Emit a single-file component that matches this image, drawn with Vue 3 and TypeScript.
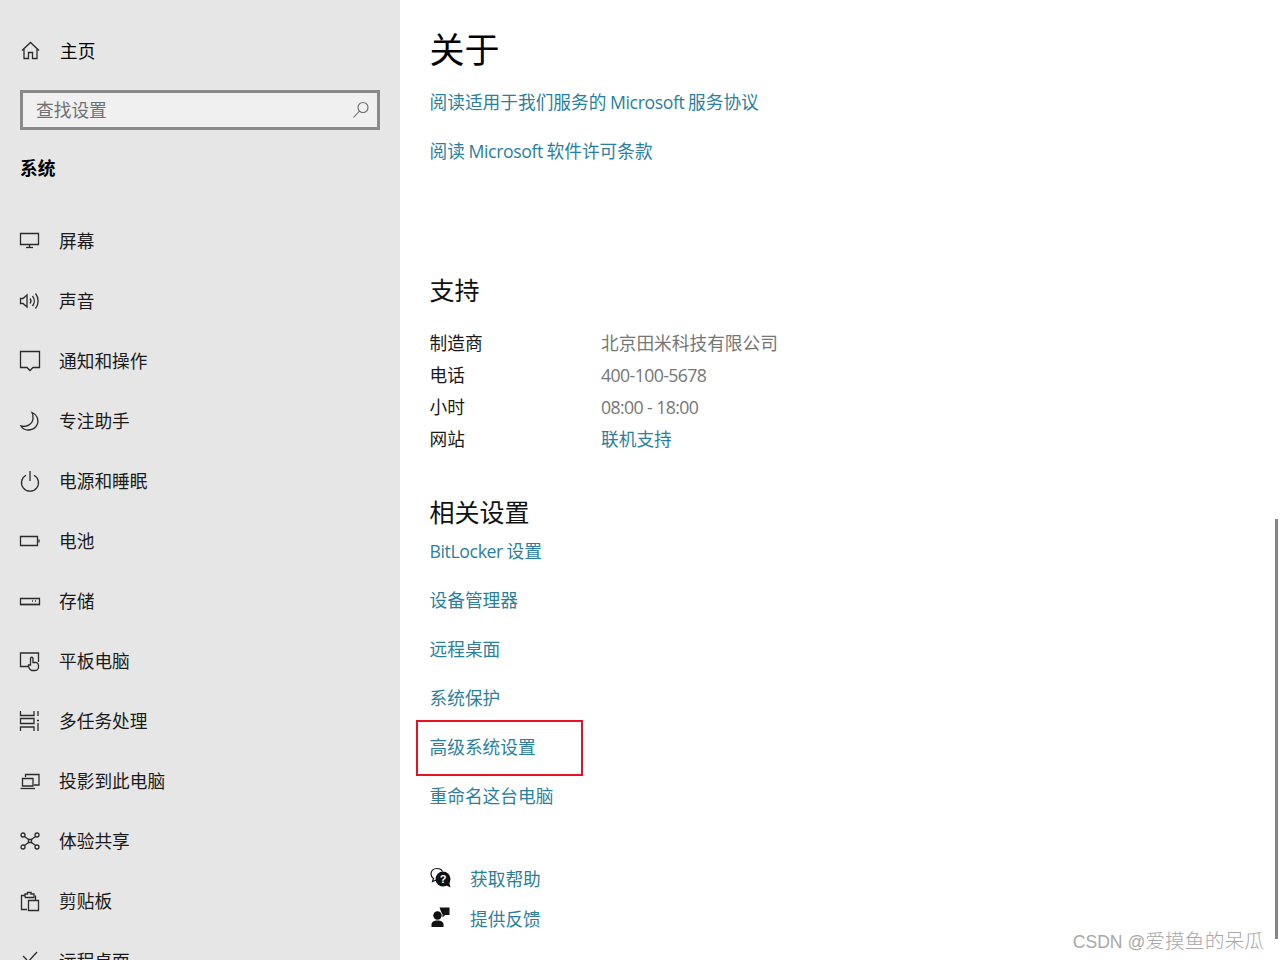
<script setup lang="ts">
interface NavItem { label: string; paths: string[] }
const navItems: NavItem[] = [
  { label: '屏幕', paths: ['M1.5 3.5H19.5V14.5H1.5Z', 'M10.5 14.5V17.5', 'M7 17.5H14'] },
  { label: '声音', paths: ['M1.5 8.5H4L8 5V17L4 13.5H1.5Z', 'M11 8.5A4 4 0 0 1 11 13.5', 'M13.5 6A8 8 0 0 1 13.5 16', 'M16.5 3.5A12 12 0 0 1 16.5 18.5'] },
  { label: '通知和操作', paths: ['M1.5 1.5H20.5V17.5H14L11 20.5L8 17.5H1.5Z'] },
  { label: '专注助手', paths: ['M13 2.5C19 5 20.5 12 17 16.5C13 21 5 21.5 2 16C8 17.5 13.5 14 14 8.5C14.2 6 13.8 4 13 2.5Z'] },
  { label: '电源和睡眠', paths: ['M7 5.2A8.5 8.5 0 1 0 15 5.2', 'M11 1V11'] },
  { label: '电池', paths: ['M1.5 6.5H18.5V15.5H1.5Z', 'M20 9.5V12.5'] },
  { label: '存储', paths: ['M1.5 8.5H20.5V14.5H1.5Z', 'M13 11H14', 'M16 11H17', 'M1.5 14.5H20.5'] },
  { label: '平板电脑', paths: ['M9 16.5H1.5V3H19.5V12', 'M12.5 20.5C10.5 19.5 9.5 17 9.5 15L11.5 15V8.5A1.2 1.2 0 0 1 14 8.5V12.5H16A3 3 0 0 1 19.5 15.5V17A3.5 3.5 0 0 1 16 20.5Z'] },
  { label: '多任务处理', paths: ['M1.5 1V5.5H15V1', 'M1.5 8.5H15V13.5H1.5Z', 'M1.5 21V17H15V21', 'M19 1V6', 'M18 10.5H20', 'M19 13V21'] },
  { label: '投影到此电脑', paths: ['M6.5 7V4.5H20V15H15', 'M3.5 8.5H14V16H3.5Z', 'M1.5 18.5H16'] },
  { label: '体验共享', paths: ['M9.5 9.5H12.5V12.5H9.5Z', 'M5.5 6.5L9.5 9.5', 'M16.5 6.5L12.5 9.5', 'M5.5 15.5L9.5 12.5', 'M16.5 15.5L12.5 12.5', 'M2 5a2 2 0 1 0 4 0a2 2 0 1 0 -4 0', 'M16 5a2 2 0 1 0 4 0a2 2 0 1 0 -4 0', 'M2 17a2 2 0 1 0 4 0a2 2 0 1 0 -4 0', 'M16 17a2 2 0 1 0 4 0a2 2 0 1 0 -4 0'] },
  { label: '剪贴板', paths: ['M8 19.5H2.5V5.5H6', 'M6 7.5V4H8.5V2.5H12V4H15V7.5H6', 'M16.5 5.5V10', 'M9.5 10.5H19.5V20.5H9.5Z'] },
  { label: '远程桌面', paths: ['M4 6L8 10', 'M18 2L8 13'] },
]
const split = (s: string): string[] => s.split(/([A-Za-z]+)/)
const topLinks = ['阅读适用于我们服务的 Microsoft 服务协议', '阅读 Microsoft 软件许可条款']
const relatedLinks = ['BitLocker 设置', '设备管理器', '远程桌面', '系统保护', '高级系统设置', '重命名这台电脑']
const supportRows = [
  { key: '制造商', value: '北京田米科技有限公司', cls: 'support-value' },
  { key: '电话', value: '400-100-5678', cls: 'support-value num' },
  { key: '小时', value: '08:00 - 18:00', cls: 'support-value num' },
  { key: '网站', value: '联机支持', cls: 'support-link' },
]
</script>

<template>
  <div class="page">
    <aside class="sidebar">
      <div class="row home">
        <svg class="icon" viewBox="0 0 22 22"><path d="M3 11.5L11.5 3.5L20 11.5M5 9.8V19.5H9.5V13.5H13.5V19.5H18V9.8" /></svg>
        <span>主页</span>
      </div>
      <div class="search">
        <span class="search-text">查找设置</span>
        <svg class="search-icon" viewBox="0 0 18 18"><path d="M6 6.5a5 5 0 1 0 10 0a5 5 0 1 0 -10 0M7.5 10L1.5 16.5" /></svg>
      </div>
      <div class="group">系统</div>
      <nav>
        <div v-for="item in navItems" :key="item.label" class="row nav-row">
          <svg class="icon" viewBox="0 0 22 22"><path v-for="d in item.paths" :key="d" :d="d" /></svg>
          <span class="nav-label">{{ item.label }}</span>
        </div>
      </nav>
    </aside>

    <main class="content">
      <h1>关于</h1>
      <a v-for="l in topLinks" :key="l" class="link">
        <span v-for="(part, i) in split(l)" :key="i" :class="{ latin: i % 2 === 1 }">{{ part }}</span>
      </a>

      <h2 class="support-title">支持</h2>
      <div class="support">
        <div v-for="r in supportRows" :key="r.key" class="support-row">
          <span class="support-key">{{ r.key }}</span>
          <span :class="r.cls">{{ r.value }}</span>
        </div>
      </div>

      <h2 class="related-title">相关设置</h2>
      <a v-for="l in relatedLinks" :key="l" class="link">
        <span v-if="l === '高级系统设置'" class="highlight"></span>
        <span v-for="(part, i) in split(l)" :key="i" :class="{ latin: i % 2 === 1 }">{{ part }}</span>
      </a>

      <div class="help">
        <div class="help-row">
          <svg class="help-icon" viewBox="0 0 22 22">
            <path class="outline" d="M7 1.5C3 1.5 1 4 1 7C1 9 2 10.5 3.5 11.5L2.5 14.5L6.5 13" />
            <path class="outline" d="M7 1.5C9.5 1.5 11.5 2.5 12.5 4.5" />
            <circle class="solid" cx="13" cy="12" r="7.5" />
            <path class="solid" d="M15.5 18L20.5 20.5L19 14.5Z" />
            <text class="q" x="13" y="16" text-anchor="middle">?</text>
          </svg>
          <a class="help-link">获取帮助</a>
        </div>
        <div class="help-row">
          <svg class="help-icon" viewBox="0 0 22 22">
            <circle class="solid" cx="7.5" cy="8.5" r="4.2" />
            <path class="solid" d="M1.5 20V17.5C1.5 15 4 13.5 7.5 13.5C11 13.5 13.5 15 13.5 17.5V20Z" />
            <path class="solid" d="M9.5 0.5H19.5V8H15L12.5 10.5V7.5L11 4.5Z" />
          </svg>
          <a class="help-link">提供反馈</a>
        </div>
      </div>
    </main>

    <div class="scrollbar"></div>
    <div class="watermark"><span class="wm-latin">CSDN @</span>爱摸鱼的呆瓜</div>
  </div>
</template>

<style scoped>
.page {
  position: relative;
  display: flex;
  width: 1280px;
  height: 960px;
  overflow: hidden;
  background: #fff;
  color: #1a1a1a;
  font-family: "Open Sans", "Noto Sans CJK SC", sans-serif;
  font-size: 17.7px;
  font-weight: 400;
}
.sidebar {
  flex: none;
  width: 400px;
  background: #e6e6e6;
  box-sizing: border-box;
  padding-top: 21px;
}
.row {
  display: flex;
  align-items: center;
  gap: 18px;
  padding-left: 19px;
}
.home {
  height: 58px;
  gap: 19px;
  color: #000;
}
.icon {
  flex: none;
  width: 22px;
  height: 22px;
  fill: none;
  stroke: #2b2b2b;
  stroke-width: 1.3;
}
.search {
  display: flex;
  align-items: center;
  justify-content: space-between;
  box-sizing: border-box;
  width: 360px;
  height: 40px;
  margin: 11px 0 0 20px;
  padding: 0 7px 0 13px;
  background: #f0f0f0;
  border: 3px solid #8a8a8a;
  color: #707070;
}
.search-text {
  padding-bottom: 2px;
}
.search-icon {
  width: 18px;
  height: 18px;
  fill: none;
  stroke: #666;
  stroke-width: 1.1;
}
.group {
  margin: 22px 0 0 20px;
  height: 34px;
  line-height: 32px;
  font-weight: 700;
  color: #000;
}
.nav-row {
  height: 60px;
}
.nav-label {
  padding-bottom: 2px;
}
nav {
  margin-top: 25px;
}
.content {
  flex: 1;
  padding-left: 29.5px;
}
h1 {
  margin: 21px 0 0;
  height: 57px;
  line-height: 58px;
  font-size: 35px;
  font-weight: 400;
  color: #000;
}
h2 {
  margin: 0;
  height: 28px;
  line-height: 26px;
  font-size: 25px;
  font-weight: 400;
  color: #111;
}
.link {
  position: relative;
  display: block;
  height: 49px;
  line-height: 49px;
  word-spacing: -1px;
  color: #2a7f9e;
}
.latin {
  letter-spacing: -0.4px;
}
.support-title {
  margin-top: 101px;
}
.support {
  margin-top: 22px;
}
.support-row {
  display: flex;
  height: 32px;
  line-height: 32px;
}
.support-key {
  flex: none;
  width: 171.5px;
}
.support-value {
  color: #767676;
}
.num {
  letter-spacing: -0.6px;
}
.support-link {
  color: #2a7f9e;
}
.related-title {
  margin-top: 44px;
}
.highlight {
  position: absolute;
  left: -13.5px;
  top: -3px;
  width: 167px;
  height: 56px;
  box-sizing: border-box;
  border: 2px solid #e81123;
}
.help {
  margin-top: 37px;
}
.help-row {
  display: flex;
  align-items: center;
  gap: 18.5px;
  height: 40px;
}
.help-icon {
  flex: none;
  width: 22px;
  height: 22px;
}
.help-link {
  color: #2a7f9e;
}
.outline {
  fill: none;
  stroke: #111;
  stroke-width: 1.2;
}
.solid {
  fill: #111;
}
.q {
  fill: #fff;
  font-family: "Liberation Sans", sans-serif;
  font-size: 11px;
  font-weight: 700;
}
.scrollbar {
  position: absolute;
  left: 1275px;
  top: 519px;
  width: 3px;
  height: 420px;
  background: #858585;
}
.watermark {
  position: absolute;
  right: 16px;
  top: 928px;
  line-height: 26px;
  font-family: "Liberation Sans", "Noto Sans CJK SC", sans-serif;
  font-size: 19.8px;
  font-weight: 300;
  color: #a8a8a8;
}
.wm-latin {
  font-size: 17.6px;
  font-weight: 400;
}
</style>
